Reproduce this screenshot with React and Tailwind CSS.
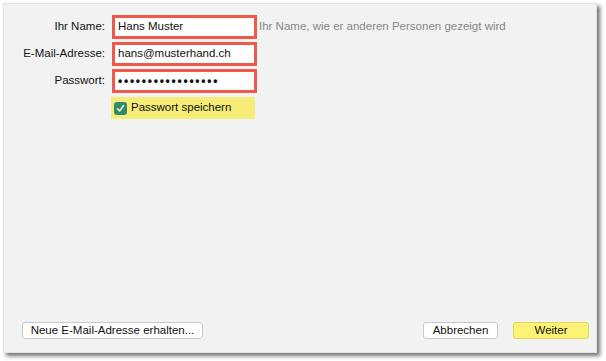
export default function App() {
  const field = "w-[145px] h-[24px] border-[3px] border-[#f0584a] bg-white flex items-center pl-[3px] text-[11.5px] text-[#111]";
  const label = "w-[101px] text-right text-[11.5px] text-[#111]";
  return (
    <div className="w-[606px] h-[361px] bg-white pt-[3px] pl-[3px]" style={{ fontFamily: '"Liberation Sans", Arial, sans-serif' }}>
      <div className="w-[594px] h-[350px] bg-[#f2f2f2] border border-[#e2e2e2] shadow-[3px_3px_4px_rgba(0,0,0,0.55)] flex flex-col">
        <div className="flex flex-col gap-[3px] pt-[11px]">
          <div className="flex items-center">
            <div className={label}>Ihr Name:</div>
            <div className={`ml-[7px] ${field}`}>Hans Muster</div>
            <div className="ml-[2px] text-[11.5px] text-[#888]">Ihr Name, wie er anderen Personen gezeigt wird</div>
          </div>
          <div className="flex items-center">
            <div className={label}>E-Mail-Adresse:</div>
            <div className={`ml-[7px] ${field}`}>hans@musterhand.ch</div>
          </div>
          <div className="flex items-center">
            <div className={label}>Passwort:</div>
            <div className={`ml-[7px] ${field}`}>
              <span className="text-[12px] tracking-[1.75px] font-bold">•••••••••••••••••</span>
            </div>
          </div>
          <div className="flex items-center mt-[1px]">
            <div className="w-[101px]" />
            <div className="ml-[6px] w-[144px] h-[22px] bg-[#f5ed78] flex items-center pl-[3px]">
              <div className="w-[13px] h-[13px] rounded-[3px] bg-[#2e8a6c] flex items-center justify-center">
                <svg width="9" height="9" viewBox="0 0 9 9">
                  <path d="M1.5 4.8 L3.6 7 L7.6 1.6" fill="none" stroke="#f3f0b0" strokeWidth="1.6" strokeLinecap="round" strokeLinejoin="round" />
                </svg>
              </div>
              <span className="ml-[4px] text-[11.5px] text-[#111]">Passwort speichern</span>
            </div>
          </div>
        </div>
        <div className="flex-1" />
        <div className="flex items-center pl-[18px] pr-[7px] pb-[13px]">
          <div className="w-[181px] h-[17px] rounded-[3px] bg-white border border-[#c8c8c8] flex items-center justify-center text-[11.5px] text-[#111]">
            Neue E-Mail-Adresse erhalten...
          </div>
          <div className="flex-1" />
          <div className="w-[75px] h-[17px] rounded-[3px] bg-white border border-[#c8c8c8] flex items-center justify-center text-[11.5px] text-[#111]">
            Abbrechen
          </div>
          <div className="ml-[15px] w-[76px] h-[17px] rounded-[3px] bg-[#fbf276] border border-[#e2d75c] flex items-center justify-center text-[11.5px] text-[#111]">
            Weiter
          </div>
        </div>
      </div>
    </div>
  );
}
